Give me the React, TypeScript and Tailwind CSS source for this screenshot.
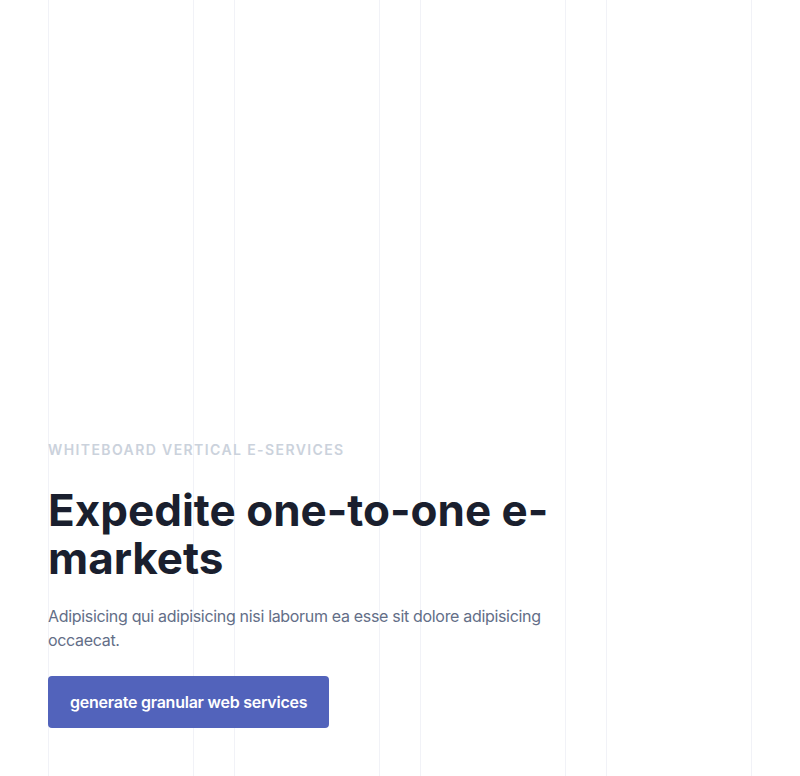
export default function App() {
  return (
    <div className="relative min-h-screen overflow-hidden bg-white" style={{ fontFamily: 'Inter, "Noto Sans", sans-serif' }}>
      {/* background column guides */}
      <div className="pointer-events-none absolute inset-0 grid grid-cols-4 gap-10 px-12">
        <div className="border-x border-[#f1f2f7]" />
        <div className="border-x border-[#f1f2f7]" />
        <div className="border-x border-[#f1f2f7]" />
        <div className="border-x border-[#f1f2f7]" />
      </div>

      <div className="relative flex min-h-screen items-end px-12 pb-12">
        <div className="max-w-lg">
          <p className="text-sm font-semibold uppercase leading-5 tracking-widest text-[#cbd2dc]">
            Whiteboard vertical e-services
          </p>
          <h1 className="mt-[26px] text-[44px] font-bold leading-[48px] text-[#1a1f2e]">
            Expedite one-to-one e-markets
          </h1>
          <p className="mt-[22px] text-base leading-6 tracking-[-0.02em] text-[#636e87]">
            Adipisicing qui adipisicing nisi laborum ea esse sit dolore adipisicing occaecat.
          </p>
          <button className="mt-6 rounded-sm bg-[#5263bb] px-[22px] py-3.5 text-base font-semibold leading-6 tracking-[-0.015em] text-white">
            generate granular web services
          </button>
        </div>
      </div>
    </div>
  )
}
